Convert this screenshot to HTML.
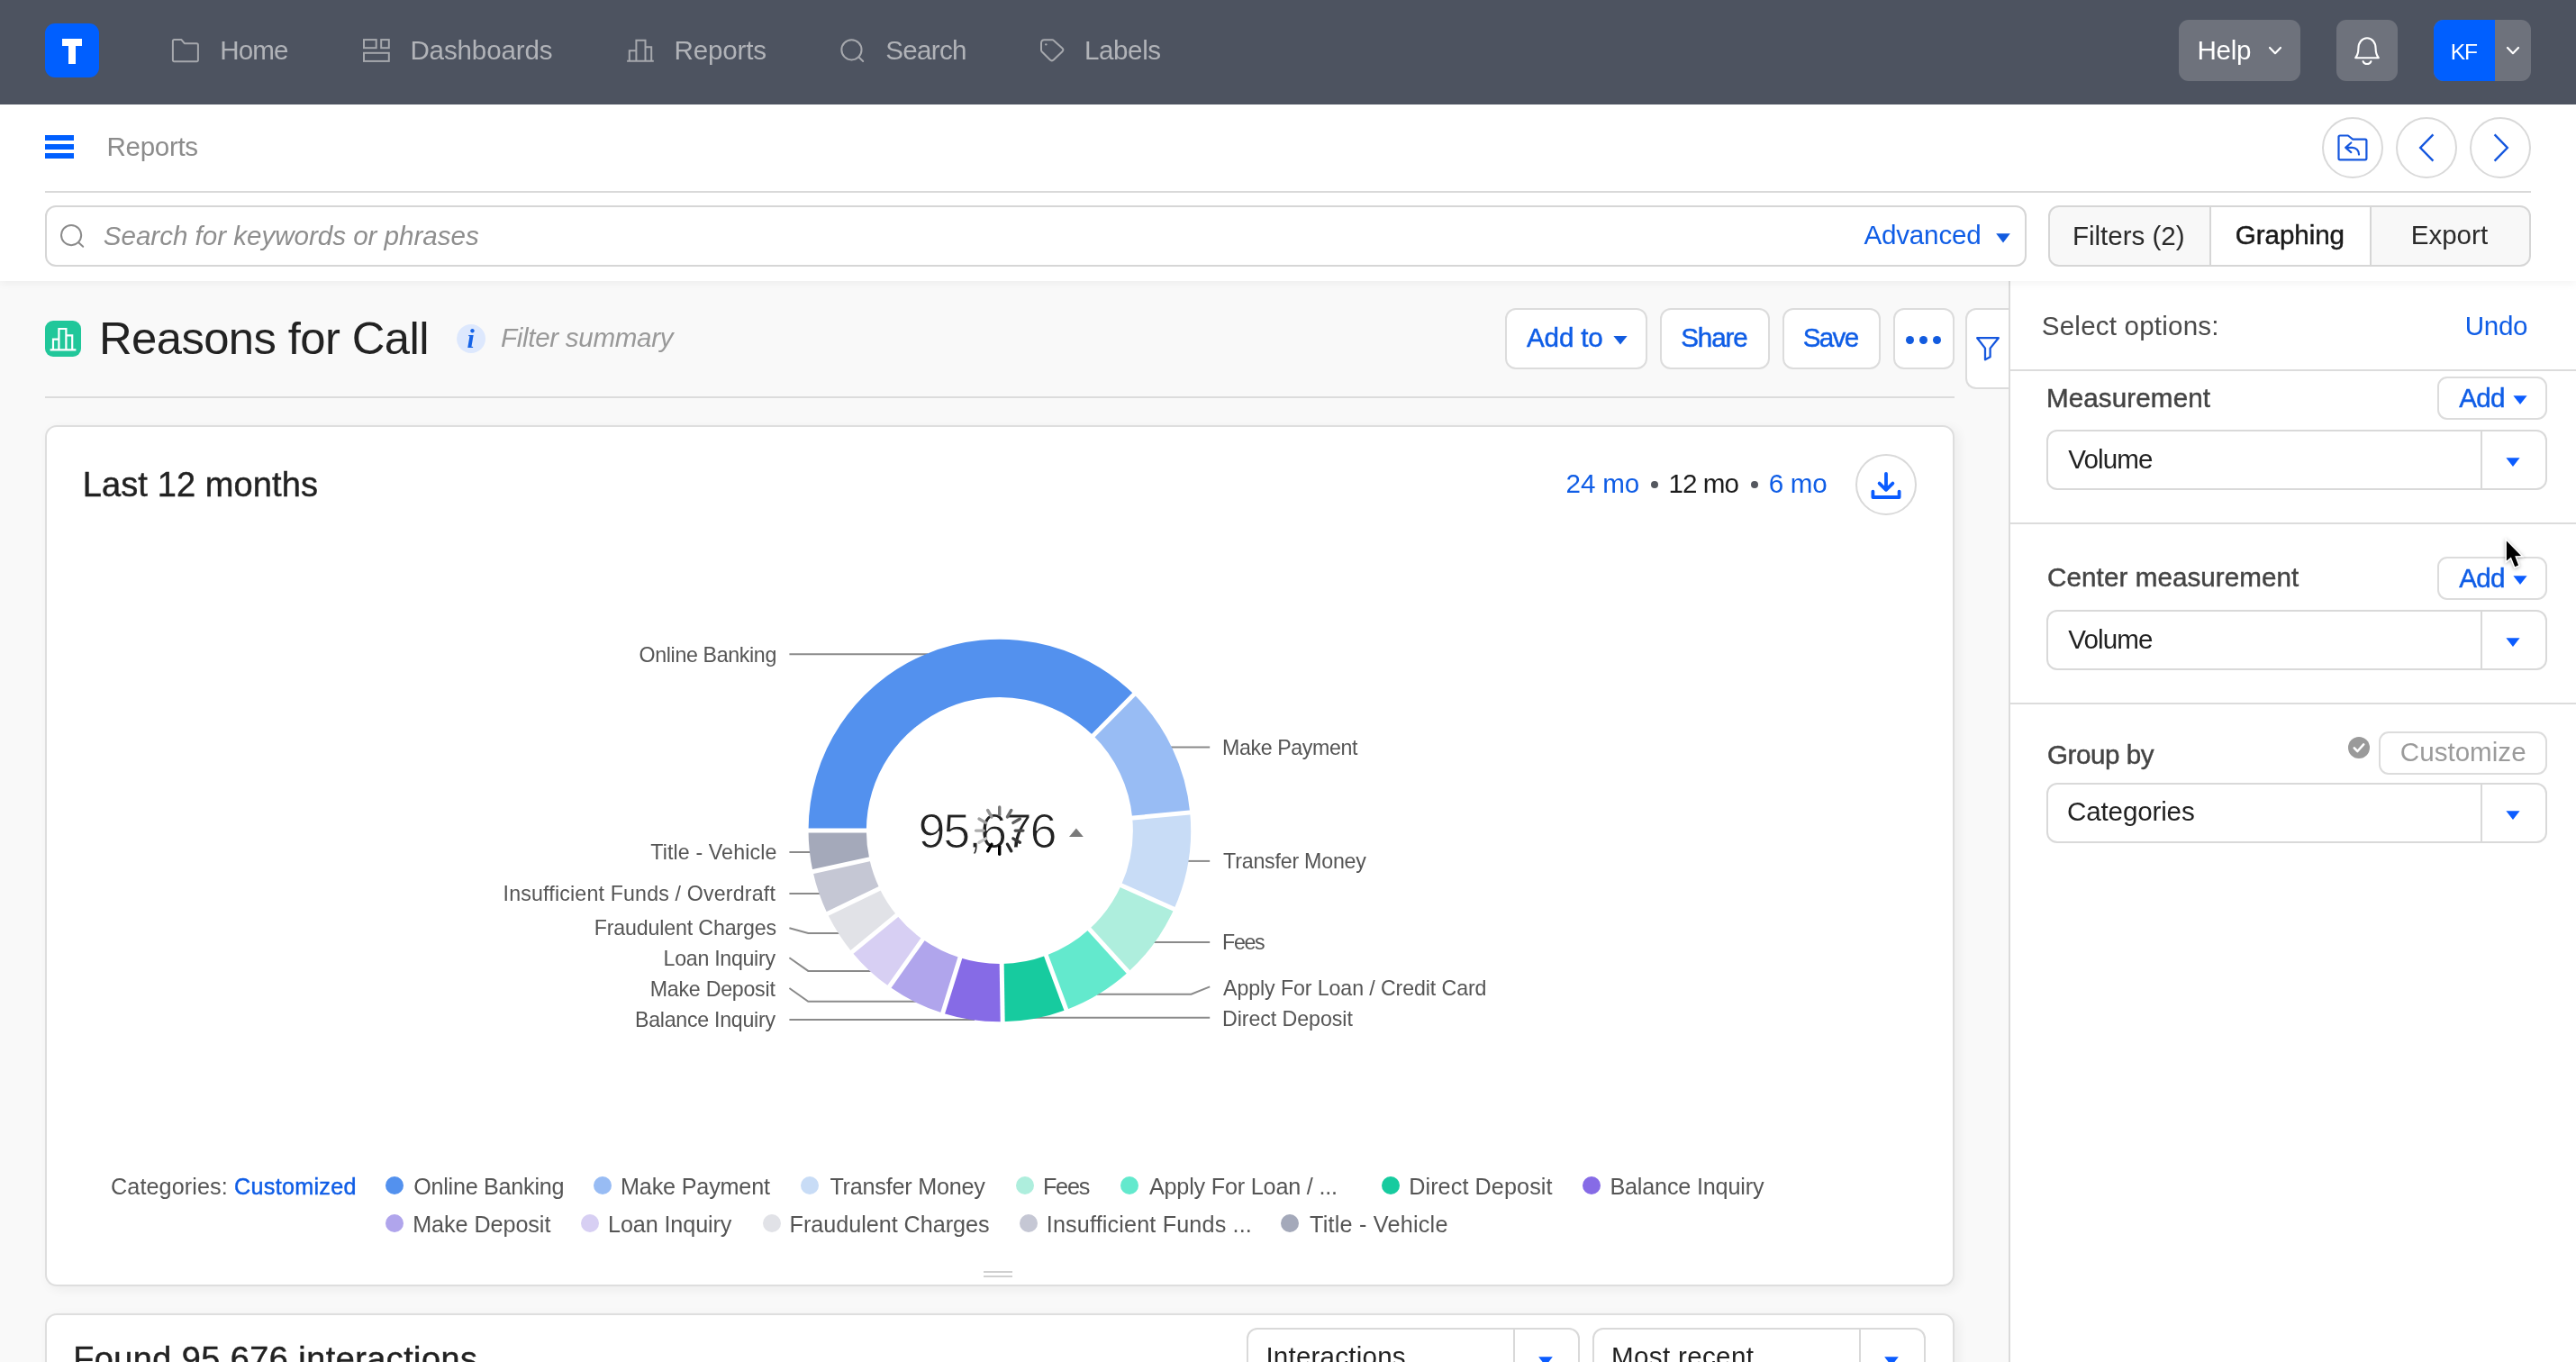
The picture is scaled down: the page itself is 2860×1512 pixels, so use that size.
<!DOCTYPE html>
<html lang="en">
<head>
<meta charset="utf-8">
<title>Reasons for Call</title>
<style>
*{box-sizing:border-box;margin:0;padding:0}
html,body{width:2860px;height:1512px;overflow:hidden}
body{position:relative;background:#f9f9f9;font-family:"Liberation Sans",sans-serif;font-size:28px;color:#222;-webkit-font-smoothing:antialiased}
.abs{position:absolute}
.t{position:absolute;white-space:nowrap;line-height:1}
.med{-webkit-text-stroke:0.45px currentColor}
.blue{color:#125bdf}
/* nav */
#nav{position:absolute;left:0;top:0;width:2860px;height:116px;background:#4d5360}
#logo{position:absolute;left:50px;top:26px;width:60px;height:60px;border-radius:11px;background:#005fff}
.nt{position:absolute;top:42px;font-size:28px;line-height:28px;color:#b9bbbf;white-space:nowrap}
.nbtn{position:absolute;top:22px;height:68px;border-radius:11px;background:#6e727c}
/* sub header */
#sub{position:absolute;left:0;top:116px;width:2860px;height:196px;background:#fff;box-shadow:0 2px 10px rgba(0,0,0,.055)}
.circ{position:absolute;width:68px;height:68px;border-radius:50%;border:2px solid #d9d9d9;background:#fff}
.btn{position:absolute;border:2px solid #dcdcdc;border-radius:12px;background:#fff}
.hline{position:absolute;height:2px;background:#dcdcdc}
.sel{position:absolute;height:67px;border:2px solid #d9d9d9;border-radius:12px;background:#fff}
.sel i{position:absolute;top:0;bottom:0;width:2px;background:#d9d9d9}
.card{position:absolute;border:2px solid #dedede;border-radius:13px;background:#fff;box-shadow:4px 3px 13px rgba(0,0,0,.06)}
.lg{position:absolute;font-size:24px;line-height:24px;color:#555;white-space:nowrap}
.dot{position:absolute;width:20px;height:20px;border-radius:50%}
.cl{position:absolute;font-size:22px;line-height:22px;color:#555;white-space:nowrap;letter-spacing:.25px}
.thin{-webkit-text-stroke:1.1px #fff}
#texts{position:absolute;left:0;top:0;width:2860px;height:1512px;will-change:transform}
</style>
</head>
<body>
<!-- ===== main content ===== -->
<div id="main">
  <div class="abs" style="left:50px;top:356px;width:40px;height:40px;border-radius:9px;background:#21c79a"></div>
  <svg class="abs" style="left:50px;top:356px" width="40" height="40" viewBox="0 0 40 40" fill="none" stroke="#fff" stroke-width="2.2"><path d="M5.600 32.400h28.800M9 32.400V20.600h6.400M15.400 32.400V9h8v23.400M23.400 16.400h6.800v16"/></svg>
  <div class="abs" style="left:507px;top:360px;width:32px;height:32px;border-radius:50%;background:#dde8fd"></div>
  <div class="btn" style="left:1671px;top:342px;width:158px;height:68px"></div>
  <svg class="abs" style="left:1790px;top:372px" width="18" height="12" viewBox="0 0 18 12"><path d="M1.400 1h15.200L9 10.600z" fill="#125bdf"/></svg>
  <div class="btn" style="left:1843px;top:342px;width:122px;height:68px"></div>
  <div class="btn" style="left:1979px;top:342px;width:109px;height:68px"></div>
  <div class="btn" style="left:2102px;top:342px;width:68px;height:68px"></div>
  <div class="abs" style="left:2116px;top:373px;width:9px;height:9px;border-radius:50%;background:#125bdf"></div>
  <div class="abs" style="left:2131px;top:373px;width:9px;height:9px;border-radius:50%;background:#125bdf"></div>
  <div class="abs" style="left:2146px;top:373px;width:9px;height:9px;border-radius:50%;background:#125bdf"></div>
  <div class="abs" style="left:2182px;top:342px;width:52px;height:90px;border:2px solid #dcdcdc;border-right:none;border-radius:12px 0 0 12px;background:#fff"></div>
  <svg class="abs" style="left:2190px;top:370px" width="34" height="34" viewBox="0 0 34 34" fill="none" stroke="#1557de" stroke-width="2.300" stroke-linejoin="round"><path d="M5.200 5.200h23.600l-9.200 11.400v9.600l-5.600 3V16.600z"/></svg>
  <div class="hline" style="left:50px;top:440px;width:2120px"></div>
  <div class="card" style="left:50px;top:472px;width:2120px;height:956px"></div>
  <div class="abs" style="left:1833px;top:534px;width:8px;height:8px;border-radius:50%;background:#55585f"></div>
  <div class="abs" style="left:1944px;top:534px;width:8px;height:8px;border-radius:50%;background:#55585f"></div>
  <div class="circ" style="left:2060px;top:504px"></div>
  <svg class="abs" style="left:2070px;top:514px" width="48" height="48" viewBox="0 0 48 48" fill="none" stroke="#0b5cff" stroke-width="3.800" stroke-linecap="round" stroke-linejoin="round"><path d="M24 11.800v17.600M16.600 22.600l7.400 7.200 7.400-7.200M9.400 31.600v6.400h29.200v-6.400"/></svg>
  <div class="abs" style="left:1092px;top:1411px;width:32px;height:2px;background:#d0d0d0"></div>
  <div class="abs" style="left:1092px;top:1416px;width:32px;height:2px;background:#d0d0d0"></div>
  <div class="card" style="left:50px;top:1458px;width:2120px;height:200px"></div>
  <div class="sel" style="left:1384px;top:1474px;width:370px"><i style="left:294px"></i></div>
  <svg class="abs" style="left:1707px;top:1505px" width="18" height="12" viewBox="0 0 18 12"><path d="M1.200 1.200h15.600L9 11.600z" fill="#0b5cff"/></svg>
  <div class="sel" style="left:1768px;top:1474px;width:370px"><i style="left:294px"></i></div>
  <svg class="abs" style="left:2091px;top:1505px" width="18" height="12" viewBox="0 0 18 12"><path d="M1.200 1.200h15.600L9 11.600z" fill="#0b5cff"/></svg>
  <svg class="abs" style="left:0;top:472px" width="2232" height="956" viewBox="0 472 2232 956">
<g fill="none" stroke="#8a8a8a" stroke-width="2">
<path d="M876.4 726.3H1030"/>
<path d="M1300 829.4H1343.2"/>
<path d="M1318 955.9H1343.2"/>
<path d="M1280 1045.9H1343.2"/>
<path d="M1218 1103.8H1322.5L1343.2 1095.4"/>
<path d="M1148 1129.8H1343.2"/>
<path d="M876.4 946H900"/>
<path d="M876.4 992H912"/>
<path d="M876.4 1030.2L897.3 1036H934"/>
<path d="M876.4 1063.2L897.3 1077.9H968"/>
<path d="M876.4 1097L897.3 1111.8H1018"/>
<path d="M876.4 1132.1H1082"/>
</g>
<g>
<path d="M897.55 922.00A212.30 212.30 0 0 1 1258.92 770.84L1213.77 816.62A148.00 148.00 0 0 0 961.85 922.00Z" fill="#5391ee"/>
<path d="M1258.92 770.84A212.30 212.30 0 0 1 1321.21 902.02L1257.19 908.07A148.00 148.00 0 0 0 1213.77 816.62Z" fill="#98bcf4"/>
<path d="M1321.21 902.02A212.30 212.30 0 0 1 1303.42 1009.20L1244.79 982.79A148.00 148.00 0 0 0 1257.19 908.07Z" fill="#c8dcf6"/>
<path d="M1303.42 1009.20A212.30 212.30 0 0 1 1252.68 1079.07L1209.42 1031.50A148.00 148.00 0 0 0 1244.79 982.79Z" fill="#aeeedd"/>
<path d="M1252.68 1079.07A212.30 212.30 0 0 1 1183.85 1120.98L1161.44 1060.72A148.00 148.00 0 0 0 1209.42 1031.50Z" fill="#63e9cd"/>
<path d="M1183.85 1120.98A212.30 212.30 0 0 1 1113.18 1134.27L1112.17 1069.98A148.00 148.00 0 0 0 1161.44 1060.72Z" fill="#17cb9f"/>
<path d="M1113.18 1134.27A212.30 212.30 0 0 1 1046.72 1124.70L1065.84 1063.30A148.00 148.00 0 0 0 1112.17 1069.98Z" fill="#866be6"/>
<path d="M1046.72 1124.70A212.30 212.30 0 0 1 987.32 1095.37L1024.43 1042.86A148.00 148.00 0 0 0 1065.84 1063.30Z" fill="#b0a5ec"/>
<path d="M987.32 1095.37A212.30 212.30 0 0 1 945.92 1056.90L995.57 1016.04A148.00 148.00 0 0 0 1024.43 1042.86Z" fill="#d7cff3"/>
<path d="M945.92 1056.90A212.30 212.30 0 0 1 918.71 1014.40L976.60 986.41A148.00 148.00 0 0 0 995.57 1016.04Z" fill="#e1e2e7"/>
<path d="M918.71 1014.40A212.30 212.30 0 0 1 902.50 967.59L965.30 953.78A148.00 148.00 0 0 0 976.60 986.41Z" fill="#c5c7d4"/>
<path d="M902.50 967.59A212.30 212.30 0 0 1 897.55 922.00L961.85 922.00A148.00 148.00 0 0 0 965.30 953.78Z" fill="#a4a9ba"/>
</g>
<g stroke="#fff" stroke-width="5">
<path d="M963.85 922.00L895.55 922.00"/>
<path d="M1212.36 818.04L1260.32 769.41"/>
<path d="M1255.20 908.26L1323.20 901.83"/>
<path d="M1242.97 981.96L1305.24 1010.02"/>
<path d="M1208.07 1030.02L1254.02 1080.55"/>
<path d="M1160.74 1058.84L1184.55 1122.86"/>
<path d="M1112.14 1067.98L1113.22 1136.27"/>
<path d="M1066.43 1061.40L1046.12 1126.61"/>
<path d="M1025.59 1041.23L986.17 1097.01"/>
<path d="M997.11 1014.77L944.37 1058.17"/>
<path d="M978.40 985.54L916.91 1015.27"/>
<path d="M967.26 953.35L900.55 968.02"/>
</g>
<path d="M1187 929L1194.9 919.5L1202.8 929z" fill="#7a7a7a"/>
</svg>
  <div class="dot" style="left:428.3px;top:1306px;background:#5391ee"></div>
<div class="dot" style="left:659.0px;top:1306px;background:#98bcf4"></div>
<div class="dot" style="left:889.2px;top:1306px;background:#c8dcf6"></div>
<div class="dot" style="left:1128.0px;top:1306px;background:#aeeedd"></div>
<div class="dot" style="left:1243.9px;top:1306px;background:#63e9cd"></div>
<div class="dot" style="left:1533.7px;top:1306px;background:#17cb9f"></div>
<div class="dot" style="left:1757.0px;top:1306px;background:#866be6"></div>
<div class="dot" style="left:428.3px;top:1348px;background:#b0a5ec"></div>
<div class="dot" style="left:645.0px;top:1348px;background:#d7cff3"></div>
<div class="dot" style="left:846.5px;top:1348px;background:#e1e2e7"></div>
<div class="dot" style="left:1132.0px;top:1348px;background:#c5c7d4"></div>
<div class="dot" style="left:1422.0px;top:1348px;background:#a4a9ba"></div>
</div>
<!-- ===== side panel ===== -->
<div id="panel" class="abs" style="left:2230px;top:312px;width:630px;height:1200px;background:#fff;border-left:2px solid #dbdbdb"></div>
<div id="panelc">
  <div class="hline" style="left:2232px;top:410px;width:628px"></div>
  <div class="btn" style="left:2706px;top:418px;width:122px;height:48px;border-radius:11px"></div>
  <svg class="abs" style="left:2789px;top:438px" width="18" height="12" viewBox="0 0 18 12"><path d="M1.400 1.200h15.200L9 11z" fill="#0b5cff"/></svg>
  <div class="sel" style="left:2272px;top:477px;width:556px"><i style="left:480px"></i></div>
  <svg class="abs" style="left:2781px;top:507px" width="18" height="12" viewBox="0 0 18 12"><path d="M1.400 1.200h15.200L9 11z" fill="#0b5cff"/></svg>
  <div class="hline" style="left:2232px;top:580px;width:628px"></div>
  <div class="btn" style="left:2706px;top:618px;width:122px;height:48px;border-radius:11px"></div>
  <svg class="abs" style="left:2789px;top:638px" width="18" height="12" viewBox="0 0 18 12"><path d="M1.400 1.200h15.200L9 11z" fill="#0b5cff"/></svg>
  <div class="sel" style="left:2272px;top:677px;width:556px"><i style="left:480px"></i></div>
  <svg class="abs" style="left:2781px;top:707px" width="18" height="12" viewBox="0 0 18 12"><path d="M1.400 1.200h15.200L9 11z" fill="#0b5cff"/></svg>
  <div class="hline" style="left:2232px;top:780px;width:628px"></div>
  <div class="abs" style="left:2607px;top:818px;width:24px;height:24px;border-radius:50%;background:#9a9a9a"></div>
  <svg class="abs" style="left:2607px;top:818px" width="24" height="24" viewBox="0 0 24 24" fill="none" stroke="#fff" stroke-width="2.600" stroke-linecap="round" stroke-linejoin="round"><path d="M6.800 12.400l3.600 3.600 6.800-7.600"/></svg>
  <div class="btn" style="left:2641px;top:812px;width:187px;height:48px;border-radius:11px"></div>
  <div class="sel" style="left:2272px;top:869px;width:556px"><i style="left:480px"></i></div>
  <svg class="abs" style="left:2781px;top:899px" width="18" height="12" viewBox="0 0 18 12"><path d="M1.400 1.200h15.200L9 11z" fill="#0b5cff"/></svg>
</div>
<!-- ===== sub header ===== -->
<div id="sub"></div>
<div id="subc">
  <div class="abs" style="left:50px;top:150px;width:32px;height:6px;background:#005fff"></div>
  <div class="abs" style="left:50px;top:160px;width:32px;height:6px;background:#005fff"></div>
  <div class="abs" style="left:50px;top:170px;width:32px;height:6px;background:#005fff"></div>
  <div class="circ" style="left:2578px;top:130px"></div>
  <svg class="abs" style="left:2590px;top:142px" width="44" height="44" viewBox="0 0 44 44" fill="none" stroke="#1557de" stroke-width="2.200" stroke-linejoin="round" stroke-linecap="round"><path d="M8 8.500h8.900l5.300 4.100h13.700a1.500 1.500 0 0 1 1.500 1.500v19.700a1.500 1.500 0 0 1-1.500 1.500H8a1.500 1.500 0 0 1-1.500-1.500V10a1.500 1.500 0 0 1 1.500-1.500z"/><path d="M20.300 16.500l-6.100 5.300 6.100 5.300M14.200 21.800h7.500c4.200 0 7.300 3.200 7.300 7.800"/></svg>
  <div class="circ" style="left:2660px;top:130px"></div>
  <svg class="abs" style="left:2672px;top:142px" width="44" height="44" viewBox="0 0 44 44" fill="none" stroke="#1557de" stroke-width="2.400"><path d="M29.400 7.400L15.200 22l14.200 14.600"/></svg>
  <div class="circ" style="left:2742px;top:130px"></div>
  <svg class="abs" style="left:2754px;top:142px" width="44" height="44" viewBox="0 0 44 44" fill="none" stroke="#1557de" stroke-width="2.400"><path d="M15.600 7.400L29.800 22 15.600 36.600"/></svg>
  <div class="hline" style="left:50px;top:212px;width:2760px;background:#d9d9d9"></div>
  <div class="btn" style="left:50px;top:228px;width:2200px;height:68px;border-color:#d6d6d6"></div>
  <svg class="abs" style="left:62px;top:244px" width="36" height="36" viewBox="0 0 36 36" fill="none" stroke="#8a8a8a" stroke-width="2" stroke-linecap="round"><circle cx="17.100" cy="17.050" r="11.100"/><path d="M25 25l5.200 4.800"/></svg>
  <svg class="abs" style="left:2215px;top:258px" width="18" height="12" viewBox="0 0 18 12"><path d="M1.200 1.200h15.600L9 11.600z" fill="#125bdf"/></svg>
  <div class="btn" style="left:2274px;top:228px;width:536px;height:68px;border-color:#d6d6d6;background:#f8f8f8;overflow:hidden">
    <div class="abs" style="left:177px;top:0;width:180px;height:64px;background:#fff;border-left:2px solid #d6d6d6;border-right:2px solid #d6d6d6"></div>
  </div>
</div>
<!-- ===== nav ===== -->
<div id="nav">
  <div id="logo"><div class="abs" style="left:18.7px;top:17.2px;width:22.600px;height:8.200px;background:#fff"></div><div class="abs" style="left:26px;top:17.2px;width:8px;height:28.200px;background:#fff"></div></div>
  <svg class="abs" style="left:189px;top:41px" width="36" height="32" viewBox="0 0 36 32" fill="none" stroke="#a6a8ad" stroke-width="2" stroke-linejoin="round"><path d="M4.400 2.900h7.800l3.600 4.300h13.600a1.500 1.500 0 0 1 1.500 1.500v17a1.500 1.500 0 0 1-1.500 1.500H4.400a1.500 1.500 0 0 1-1.500-1.500V4.400a1.500 1.500 0 0 1 1.500-1.500z"/></svg>
  <svg class="abs" style="left:400px;top:41px" width="36" height="32" viewBox="0 0 36 32" fill="none" stroke="#a6a8ad" stroke-width="2"><rect x="4" y="3.100" width="13.700" height="9.100"/><rect x="23.200" y="3.100" width="8.600" height="9.100"/><rect x="4" y="17.800" width="27.800" height="9.100"/></svg>
  <svg class="abs" style="left:694px;top:41px" width="36" height="32" viewBox="0 0 36 32" fill="none" stroke="#a6a8ad" stroke-width="2"><path d="M2.100 26.700h29.700M4.800 26.700V15.200h7.600M12.400 26.700V3.700h10.100v23M22.500 11.200h6.700v15.500"/></svg>
  <svg class="abs" style="left:929px;top:41px" width="36" height="32" viewBox="0 0 36 32" fill="none" stroke="#a6a8ad" stroke-width="2" stroke-linecap="round"><circle cx="16.450" cy="14.300" r="11.100"/><path d="M24.300 22.200l4.900 4.800"/></svg>
  <svg class="abs" style="left:1152px;top:41px" width="36" height="32" viewBox="0 0 36 32" fill="none" stroke="#a6a8ad" stroke-width="2" stroke-linejoin="round"><path d="M7.400 3.200H16.200Q17.200 3.200 17.900 3.900L27.400 12.400Q29.400 14.300 27.400 16.300L18 25.300Q15.800 27.400 13.700 25.300L4.900 16.500Q4 15.600 4 14.400V6.800Q4 3.200 7.400 3.200Z"/><circle cx="9.300" cy="8.350" r="1.200" fill="#a6a8ad" stroke="none"/></svg>
  <div class="nbtn" style="left:2419px;width:135px"></div>
  <svg class="abs" style="left:2514px;top:46px" width="24" height="20" viewBox="0 0 24 20" fill="none" stroke="#fff" stroke-width="2.200" stroke-linecap="round" stroke-linejoin="round"><path d="M6 7l6 6.200 6-6.200"/></svg>
  <div class="nbtn" style="left:2594px;width:68px"></div>
  <svg class="abs" style="left:2608px;top:36px" width="40" height="40" viewBox="0 0 40 40" fill="none" stroke="#fff" stroke-width="2.100" stroke-linecap="round" stroke-linejoin="round"><path d="M7.200 28.200c2.400-3 3.200-6 3.200-10.400 0-6.800 4.200-11.600 9.600-11.600s9.600 4.800 9.600 11.600c0 4.400.8 7.400 3.200 10.400z"/><path d="M15.600 32.200c.8 1.800 2.400 2.800 4.400 2.800s3.600-1 4.400-2.800"/></svg>
  <div class="nbtn" style="left:2702px;width:108px"></div>
  <div class="nbtn" style="left:2702px;width:68px;background:#005fff;border-radius:11px 0 0 11px"></div>
  <svg class="abs" style="left:2778px;top:46px" width="24" height="20" viewBox="0 0 24 20" fill="none" stroke="#fff" stroke-width="2.200" stroke-linecap="round" stroke-linejoin="round"><path d="M6 7l6 6.200 6-6.200"/></svg>
</div>
<div id="texts">
<div class="t" style="left:244.20px;top:40.60px;font-size:29.60px;line-height:30px;color:#b1b3b8;letter-spacing:-0.894px">Home</div>
<div class="t" style="left:455.40px;top:40.60px;font-size:29.60px;line-height:30px;color:#b1b3b8;letter-spacing:-0.153px">Dashboards</div>
<div class="t" style="left:748.50px;top:40.60px;font-size:29.60px;line-height:30px;color:#b1b3b8;letter-spacing:-0.171px">Reports</div>
<div class="t" style="left:983.20px;top:40.60px;font-size:29.60px;line-height:30px;color:#b1b3b8;letter-spacing:-0.702px">Search</div>
<div class="t" style="left:1204.00px;top:40.60px;font-size:29.60px;line-height:30px;color:#b1b3b8;letter-spacing:-0.422px">Labels</div>
<div class="t" style="left:2439.60px;top:40.50px;font-size:29.60px;line-height:30px;color:#fff;letter-spacing:-0.368px">Help</div>
<div class="t" style="left:2720.80px;top:44.50px;font-size:24.60px;line-height:25px;color:#fff;letter-spacing:-1.204px">KF</div>
<div class="t" style="left:118.50px;top:148.30px;font-size:29.60px;line-height:30px;color:#8c8c8c;letter-spacing:-0.337px">Reports</div>
<div class="t" style="left:114.80px;top:246.50px;font-size:29.60px;line-height:30px;color:#8e8e8e;letter-spacing:-0.030px;font-style:italic">Search for keywords or phrases</div>
<div class="t" style="left:2069.40px;top:246.30px;font-size:29.60px;line-height:30px;color:#0f5de6;letter-spacing:-0.181px">Advanced</div>
<div class="t" style="left:2301.00px;top:246.50px;font-size:29.60px;line-height:30px;color:#2b2b2b;letter-spacing:-0.039px">Filters (2)</div>
<div class="t med" style="left:2481.80px;top:246.30px;font-size:29.60px;line-height:30px;color:#1a1a1a;letter-spacing:-0.069px">Graphing</div>
<div class="t" style="left:2676.70px;top:246.30px;font-size:29.60px;line-height:30px;color:#2b2b2b;letter-spacing:-0.022px">Export</div>
<div class="t" style="left:110.00px;top:349.80px;font-size:50.80px;line-height:51px;color:#222;letter-spacing:-0.601px">Reasons for Call</div>
<div class="t" style="left:518.40px;top:360.50px;font-size:30.00px;line-height:30px;color:#1463e8;font-style:italic;font-weight:700;font-family:'Liberation Serif',serif">i</div>
<div class="t" style="left:556.00px;top:360.40px;font-size:29.60px;line-height:30px;color:#999;letter-spacing:-0.312px;font-style:italic">Filter summary</div>
<div class="t med" style="left:1695.00px;top:360.30px;font-size:29.60px;line-height:30px;color:#0f5de6;letter-spacing:-0.160px">Add to</div>
<div class="t med" style="left:1866.20px;top:360.30px;font-size:29.60px;line-height:30px;color:#0f5de6;letter-spacing:-1.103px">Share</div>
<div class="t med" style="left:2001.70px;top:360.30px;font-size:29.60px;line-height:30px;color:#0f5de6;letter-spacing:-1.631px">Save</div>
<div class="t med" style="left:91.80px;top:518.80px;font-size:38.00px;line-height:38px;color:#222;letter-spacing:0.098px">Last 12 months</div>
<div class="t" style="left:1738.60px;top:522.00px;font-size:29.60px;line-height:30px;color:#0f5de6;letter-spacing:-0.173px">24 mo</div>
<div class="t" style="left:1852.50px;top:522.00px;font-size:29.60px;line-height:30px;color:#1c1c1c;letter-spacing:-0.973px">12 mo</div>
<div class="t" style="left:1963.70px;top:522.00px;font-size:29.60px;line-height:30px;color:#0f5de6;letter-spacing:-0.278px">6 mo</div>
<div class="t med" style="left:81.30px;top:1489.00px;font-size:37.80px;line-height:38px;color:#222;letter-spacing:0.481px">Found 95,676 interactions</div>
<div class="t" style="left:1405.40px;top:1491.00px;font-size:29.60px;line-height:30px;color:#222;letter-spacing:0.201px">Interactions</div>
<div class="t" style="left:1789.00px;top:1491.00px;font-size:29.60px;line-height:30px;color:#222;letter-spacing:0.332px">Most recent</div>
<div class="t" style="left:2266.80px;top:346.60px;font-size:29.60px;line-height:30px;color:#4a4a4a;letter-spacing:0.186px">Select options:</div>
<div class="t" style="left:2736.80px;top:346.80px;font-size:29.60px;line-height:30px;color:#0f5de6;letter-spacing:-0.363px">Undo</div>
<div class="t med" style="left:2271.90px;top:426.70px;font-size:29.60px;line-height:30px;color:#444;letter-spacing:0.119px">Measurement</div>
<div class="t med" style="left:2730.30px;top:426.70px;font-size:29.60px;line-height:30px;color:#0f5de6;letter-spacing:-0.749px">Add</div>
<div class="t" style="left:2296.30px;top:494.50px;font-size:29.60px;line-height:30px;color:#222;letter-spacing:-0.910px">Volume</div>
<div class="t med" style="left:2273.10px;top:626.40px;font-size:29.60px;line-height:30px;color:#444;letter-spacing:0.073px">Center measurement</div>
<div class="t med" style="left:2730.30px;top:626.70px;font-size:29.60px;line-height:30px;color:#0f5de6;letter-spacing:-0.749px">Add</div>
<div class="t" style="left:2296.30px;top:694.50px;font-size:29.60px;line-height:30px;color:#222;letter-spacing:-0.910px">Volume</div>
<div class="t med" style="left:2273.00px;top:822.90px;font-size:29.60px;line-height:30px;color:#444;letter-spacing:-0.447px">Group by</div>
<div class="t" style="left:2664.80px;top:820.40px;font-size:29.60px;line-height:30px;color:#9b9b9b">Customize</div>
<div class="t" style="left:2295.00px;top:886.30px;font-size:29.60px;line-height:30px;color:#222;letter-spacing:-0.157px">Categories</div>
<div class="t" style="left:709.60px;top:714.60px;font-size:23.20px;line-height:24px;color:#555;letter-spacing:-0.351px">Online Banking</div>
<div class="t" style="left:722.30px;top:934.00px;font-size:23.20px;line-height:24px;color:#555;letter-spacing:0.120px">Title - Vehicle</div>
<div class="t" style="left:558.60px;top:980.10px;font-size:23.20px;line-height:24px;color:#555;letter-spacing:0.171px">Insufficient Funds / Overdraft</div>
<div class="t" style="left:659.80px;top:1018.30px;font-size:23.20px;line-height:24px;color:#555;letter-spacing:-0.162px">Fraudulent Charges</div>
<div class="t" style="left:736.60px;top:1052.30px;font-size:23.20px;line-height:24px;color:#555;letter-spacing:-0.293px">Loan Inquiry</div>
<div class="t" style="left:721.70px;top:1085.90px;font-size:23.20px;line-height:24px;color:#555;letter-spacing:-0.238px">Make Deposit</div>
<div class="t" style="left:705.00px;top:1119.90px;font-size:23.20px;line-height:24px;color:#555;letter-spacing:-0.274px">Balance Inquiry</div>
<div class="t" style="left:1357.10px;top:818.00px;font-size:23.20px;line-height:24px;color:#555;letter-spacing:-0.391px">Make Payment</div>
<div class="t" style="left:1358.10px;top:944.30px;font-size:23.20px;line-height:24px;color:#555;letter-spacing:-0.209px">Transfer Money</div>
<div class="t" style="left:1357.10px;top:1034.20px;font-size:23.20px;line-height:24px;color:#555;letter-spacing:-1.318px">Fees</div>
<div class="t" style="left:1358.10px;top:1084.50px;font-size:23.20px;line-height:24px;color:#555;letter-spacing:-0.101px">Apply For Loan / Credit Card</div>
<div class="t" style="left:1357.10px;top:1118.50px;font-size:23.20px;line-height:24px;color:#555;letter-spacing:-0.067px">Direct Deposit</div>
<div class="t thin" id="ctr" style="left:1019.50px;top:894.50px;font-size:54.00px;line-height:54px;color:#222;letter-spacing:-2.226px">95,676</div>
<div class="t" style="left:123.10px;top:1303.90px;font-size:25.20px;line-height:26px;color:#555;letter-spacing:0.079px">Categories:</div>
<div class="t med" style="left:260.10px;top:1303.90px;font-size:25.20px;line-height:26px;color:#0f5de6;letter-spacing:0.258px">Customized</div>
<div class="t" style="left:459.20px;top:1303.90px;font-size:25.20px;line-height:26px;color:#555;letter-spacing:-0.271px">Online Banking</div>
<div class="t" style="left:689.00px;top:1303.90px;font-size:25.20px;line-height:26px;color:#555;letter-spacing:-0.181px">Make Payment</div>
<div class="t" style="left:921.40px;top:1303.90px;font-size:25.20px;line-height:26px;color:#555;letter-spacing:-0.227px">Transfer Money</div>
<div class="t" style="left:1157.90px;top:1303.90px;font-size:25.20px;line-height:26px;color:#555;letter-spacing:-1.167px">Fees</div>
<div class="t" style="left:1275.90px;top:1303.90px;font-size:25.20px;line-height:26px;color:#555;letter-spacing:-0.190px">Apply For Loan / ...</div>
<div class="t" style="left:1564.20px;top:1303.90px;font-size:25.20px;line-height:26px;color:#555;letter-spacing:0.087px">Direct Deposit</div>
<div class="t" style="left:1787.40px;top:1303.90px;font-size:25.20px;line-height:26px;color:#555;letter-spacing:-0.180px">Balance Inquiry</div>
<div class="t" style="left:458.20px;top:1345.80px;font-size:25.20px;line-height:26px;color:#555;letter-spacing:-0.072px">Make Deposit</div>
<div class="t" style="left:675.00px;top:1345.80px;font-size:25.20px;line-height:26px;color:#555;letter-spacing:-0.112px">Loan Inquiry</div>
<div class="t" style="left:876.60px;top:1345.80px;font-size:25.20px;line-height:26px;color:#555;letter-spacing:-0.037px">Fraudulent Charges</div>
<div class="t" style="left:1161.80px;top:1345.80px;font-size:25.20px;line-height:26px;color:#555;letter-spacing:0.146px">Insufficient Funds ...</div>
<div class="t" style="left:1454.00px;top:1345.80px;font-size:25.20px;line-height:26px;color:#555;letter-spacing:0.226px">Title - Vehicle</div>
</div>
<svg class="abs" style="left:1070px;top:882px" width="80" height="80" viewBox="1070 882 80 80">
<g stroke-width="3.4" stroke-linecap="round">
<path d="M1109.70 904.60L1109.70 895.90" stroke="#7a7a7a"/>
<path d="M1118.45 906.94L1122.80 899.41" stroke="#6c6c6c"/>
<path d="M1124.86 913.35L1132.39 909.00" stroke="#5c5c5c"/>
<path d="M1127.20 922.10L1135.90 922.10" stroke="#484848"/>
<path d="M1124.86 930.85L1132.39 935.20" stroke="#363636"/>
<path d="M1118.45 937.26L1122.80 944.79" stroke="#262626"/>
<path d="M1109.70 939.60L1109.70 948.30" stroke="#000"/>
<path d="M1100.95 937.26L1096.60 944.79" stroke="#000"/>
<path d="M1094.54 930.85L1087.01 935.20" stroke="#c4c4c4"/>
<path d="M1092.20 922.10L1083.50 922.10" stroke="#adadad"/>
<path d="M1094.54 913.35L1087.01 909.00" stroke="#a0a0a0"/>
<path d="M1100.95 906.94L1096.60 899.41" stroke="#949494"/>
</g></svg>
<!-- cursor -->
<svg class="abs" style="left:2770px;top:590px;filter:drop-shadow(0 1.500px 2px rgba(0,0,0,.3))" width="44" height="56" viewBox="0 0 44 56"><path d="M12.9 10.6L12.9 32.6L17.9 28.5L22.2 39.2L26.1 37.5L22.2 27.3L29.0 27.1z" fill="#000" stroke="#fff" stroke-width="3" stroke-linejoin="miter" paint-order="stroke fill"/></svg>

</body>
</html>
